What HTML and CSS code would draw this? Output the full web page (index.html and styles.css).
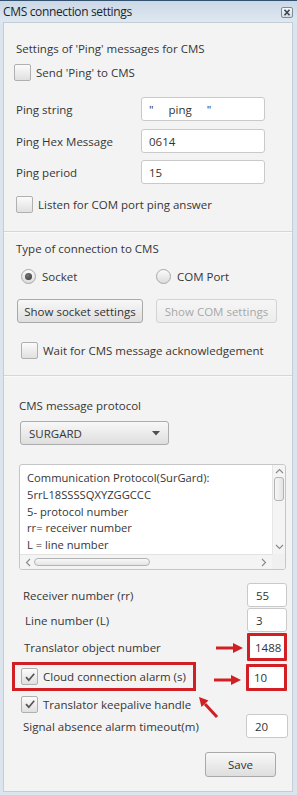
FILE: index.html
```html
<!DOCTYPE html>
<html>
<head>
<meta charset="utf-8">
<link rel="stylesheet" href="styles.css">
</head>
<body>
<div class="win">
  <div class="titlebar">
    <span class="title">CMS connection settings</span>
    <span class="close"><svg width="10" height="9" viewBox="0 0 10 9"><path d="M2.5 1.8 L7.5 7.2 M7.5 1.8 L2.5 7.2" stroke="#3a4350" stroke-width="1.6" fill="none"/></svg></span>
  </div>
  <div class="panel">
    <div class="s1">
      <div class="row heading h1">Settings of 'Ping' messages for CMS</div>
      <div class="row chkrow send"><span class="cb"></span><span>Send 'Ping' to CMS</span></div>
      <div class="row field f-ps"><span class="lbl1">Ping string</span><span class="inp wide">"&nbsp;&nbsp;&nbsp;&nbsp;&nbsp;ping&nbsp;&nbsp;&nbsp;&nbsp;&nbsp;"</span></div>
      <div class="row field f-hex"><span class="lbl1">Ping Hex Message</span><span class="inp wide">0614</span></div>
      <div class="row field f-per"><span class="lbl1">Ping period</span><span class="inp wide">15</span></div>
      <div class="row chkrow listen"><span class="cb"></span><span>Listen for COM port ping answer</span></div>
    </div>
    <div class="sep sep1"></div>
    <div class="s2">
      <div class="row heading h2">Type of connection to CMS</div>
      <div class="row radios">
        <span class="radio-item first"><span class="rb on"></span>Socket</span>
        <span class="radio-item"><span class="rb"></span>COM Port</span>
      </div>
      <div class="row btns">
        <span class="btn b-sock">Show socket settings</span>
        <span class="btn b-com disabled">Show COM settings</span>
      </div>
      <div class="row chkrow wait"><span class="cb"></span><span>Wait for CMS message acknowledgement</span></div>
    </div>
    <div class="sep sep2"></div>
    <div class="s3">
      <div class="row heading h3">CMS message protocol</div>
      <div class="combo"><span>SURGARD</span><svg width="8" height="5" viewBox="0 0 8 5"><path d="M0 0 H8 L4 4.5 Z" fill="#505050"/></svg></div>
      <div class="tarea">
        <div class="tcontent">
          <div>Communication Protocol(SurGard):</div>
          <div>5rrL18SSSSQXYZGGCCC</div>
          <div>5- protocol number</div>
          <div>rr= receiver number</div>
          <div>L = line number</div>
        </div>
        <div class="vscroll">
          <svg class="arr" width="9" height="6" viewBox="0 0 9 6"><path d="M1 5 L4.5 1.5 L8 5" stroke="#8a8a8a" fill="none" stroke-width="1.1"/></svg>
          <span class="vthumb"></span>
          <span class="vspace"></span>
          <svg class="arr" width="9" height="6" viewBox="0 0 9 6"><path d="M1 1 L4.5 4.5 L8 1" stroke="#8a8a8a" fill="none" stroke-width="1.1"/></svg>
        </div>
        <div class="hscroll">
          <svg width="6" height="9" viewBox="0 0 6 9"><path d="M5 1 L1.5 4.5 L5 8" stroke="#8a8a8a" fill="none" stroke-width="1.1"/></svg>
          <span class="hthumb"></span>
          <span class="hspace"></span>
          <svg width="6" height="9" viewBox="0 0 6 9"><path d="M1 1 L4.5 4.5 L1 8" stroke="#8a8a8a" fill="none" stroke-width="1.1"/></svg>
        </div>
        <div class="corner"></div>
      </div>
      <div class="row nfield f-rec"><span class="lbl2">Receiver number (rr)</span><span class="inp num">55</span></div>
      <div class="row nfield f-line"><span class="lbl2 l-line">Line number (L)</span><span class="inp num">3</span></div>
      <div class="row nfield f-tr"><span class="lbl2 l-tr">Translator object number</span><span class="inp num red">1488</span></div>
      <div class="row nfield f-cloud">
        <span class="redbox"><span class="cb checked"><svg width="14" height="14" viewBox="0 0 14 14"><path d="M3 7.2 L5.8 10.2 L11.2 3.8" stroke="#555" stroke-width="1.7" fill="none"/></svg></span><span>Cloud connection alarm (s)</span></span>
        <span class="inp num red cl">10</span>
      </div>
      <div class="row chkrow keep"><span class="cb checked"><svg width="14" height="14" viewBox="0 0 14 14"><path d="M3 7.2 L5.8 10.2 L11.2 3.8" stroke="#555" stroke-width="1.7" fill="none"/></svg></span><span>Translator keepalive handle</span></div>
      <div class="row nfield f-sig"><span class="lbl2">Signal absence alarm timeout(m)</span><span class="inp num sig">20</span></div>
      <div class="row savebar"><span class="btn save">Save</span></div>
    </div>
  </div>
  <svg class="annot" width="297" height="795" viewBox="0 0 297 795">
    <g fill="#d11f24" stroke="#d11f24">
      <line x1="216" y1="647" x2="236" y2="647" stroke-width="3"/>
      <path d="M233 642 L243 647 L233 652 Z" stroke="none"/>
      <line x1="214" y1="679" x2="234" y2="679" stroke-width="3"/>
      <path d="M231 674 L241 679 L231 684 Z" stroke="none"/>
      <line x1="217" y1="716" x2="205" y2="703" stroke-width="3"/>
      <path d="M199 696 L208.5 699.5 L201.5 706 Z" stroke="none"/>
    </g>
  </svg>
</div>
</body>
</html>
```
FILE: styles.css
```css
* { box-sizing: border-box; }
body {
  margin: 0;
  font-family: "Open Sans", "Noto Sans", sans-serif;
  font-size: 11.5px;
  color: #363636;
  background: #fff;
}
.win {
  position: relative;
  width: 297px;
  height: 795px;
  background: #dce5ee;
  border-top: 1px solid #34506f;
}
.titlebar {
  height: 21px;
  display: flex;
  align-items: center;
  justify-content: space-between;
  padding: 0 4px 0 3px;
  background: linear-gradient(#cbd8e6, #dfe8f1);
}
.title { font-size: 12px; letter-spacing: -0.35px; color: #1f2328; }
.close {
  width: 12px;
  height: 11px;
  border: 1px solid #7e8b9a;
  border-radius: 2px;
  background: linear-gradient(#f6f8fb, #d3dbe4);
  display: flex;
  align-items: center;
  justify-content: center;
  margin-top: 2px;
}
.panel {
  margin: 0 4px 0 3px;
  height: 770px;
  background: #f3f3f3;
  border: 1px solid #c4ccd5;
}
.row { display: flex; align-items: center; white-space: nowrap; }

/* section 1 */
.h1 { margin: 15px 0 0 12px; height: 20px; }
.send { margin: 4px 0 0 10px; height: 20px; }
.f-ps { margin: 15px 0 0 12px; height: 24px; }
.f-hex { margin: 8px 0 0 12px; height: 24px; }
.f-per { margin: 7px 0 0 12px; height: 24px; }
.listen { margin: 10px 0 0 12px; height: 20px; }
.lbl1 { width: 125px; }

.chkrow .cb { margin-right: 5px; }
.cb {
  width: 17px;
  height: 17px;
  border: 1px solid #b0b0b0;
  border-radius: 2px;
  background: linear-gradient(#fbfbfb, #e0e0e0);
  display: inline-flex;
  align-items: center;
  justify-content: center;
  flex: none;
}
.inp {
  height: 24px;
  background: #fff;
  border: 1px solid #c9c9c9;
  border-radius: 3px;
  display: flex;
  align-items: center;
  padding-left: 7px;
  color: #333;
}
.inp.wide { width: 124px; }

.sep {
  height: 2px;
  border-top: 1px solid #d6d6d6;
  background: #fafafa;
}
.sep1 { margin-top: 17px; }
.sep2 { margin-top: 15px; }

/* section 2 */
.h2 { margin: 5px 0 0 12px; height: 20px; }
.radios { margin: 8px 0 0 17px; height: 20px; }
.radio-item { display: flex; align-items: center; }
.radio-item.first { width: 135px; }
.rb {
  width: 15px;
  height: 15px;
  border: 1px solid #a8a8a8;
  border-radius: 50%;
  background: linear-gradient(#fbfbfb, #dcdcdc);
  margin-right: 6px;
  display: inline-flex;
  align-items: center;
  justify-content: center;
}
.rb.on::after {
  content: "";
  width: 7px;
  height: 7px;
  border-radius: 50%;
  background: radial-gradient(circle at 40% 35%, #777, #333);
}
.btns { margin: 13px 0 0 13px; height: 24px; gap: 13px; }
.btn {
  height: 24px;
  display: flex;
  align-items: center;
  justify-content: center;
  border: 1px solid #a9a9a9;
  border-radius: 3px;
  background: linear-gradient(#f8f8f8, #dedede);
  color: #333;
}
.b-sock { width: 126px; }
.b-com { width: 121px; }
.btn.disabled {
  border-color: #d3d3d3;
  background: linear-gradient(#f6f6f6, #ececec);
  color: #a8a8a8;
}
.wait { margin: 17px 0 0 17px; height: 20px; }

/* section 3 */
.h3 { margin: 18px 0 0 15px; height: 20px; }
.combo {
  margin: 6px 0 0 16px;
  width: 149px;
  height: 24px;
  border: 1px solid #acacac;
  border-radius: 3px;
  background: linear-gradient(#f8f8f8, #dedede);
  display: flex;
  align-items: center;
  justify-content: space-between;
  padding: 0 8px 0 8px;
}
.tarea {
  margin: 19px 0 0 15px;
  width: 267px;
  height: 106px;
  border: 1px solid #c6c6c6;
  border-radius: 3px;
  background: #fff;
  display: grid;
  grid-template-columns: 1fr 13px;
  grid-template-rows: 1fr 15px;
  overflow: hidden;
}
.tcontent {
  padding: 5px 0 0 7px;
  font-size: 11.2px;
  line-height: 16.8px;
  white-space: nowrap;
  overflow: hidden;
}
.vscroll {
  display: flex;
  flex-direction: column;
  align-items: center;
  padding: 3px 0 0 0;
  background: #f4f4f4;
  border-left: 1px solid #e6e6e6;
}
.vthumb {
  width: 10px;
  height: 24px;
  margin-top: 3px;
  border: 1px solid #b3b3b3;
  border-radius: 3px;
  background: linear-gradient(90deg, #f6f6f6, #e4e4e4);
}
.vspace { flex: 1; }
.vscroll .arr:last-child { margin-bottom: 4px; }
.hscroll {
  display: flex;
  align-items: center;
  padding: 0 5px 0 5px;
  background: #f4f4f4;
  border-top: 1px solid #e2e2e2;
}
.hthumb {
  width: 116px;
  height: 8px;
  margin-left: 3px;
  border: 1px solid #b3b3b3;
  border-radius: 4px;
  background: linear-gradient(#f8f8f8, #e4e4e4);
}
.hspace { flex: 1; }
.corner { background: #f0f0f0; }

.nfield { margin-right: 5px; }
.lbl2 { flex: 1; padding-left: 19px; }
.l-line { padding-left: 21px; }
.l-tr { padding-left: 20px; }
.inp.num { width: 40px; height: 24px; padding-left: 8px; }
.f-rec { margin-top: 13px; height: 24px; }
.f-line { margin-top: 1px; height: 24px; }
.f-tr { margin-top: 1px; height: 28px; }
.inp.red { border: 3px solid #d11f24; border-radius: 1px; height: 28px; padding-left: 5px; }
.f-cloud { margin-top: 1px; height: 29px; align-items: flex-start; }
.redbox {
  margin-left: 8px;
  width: 184px;
  height: 29px;
  border: 3px solid #d11f24;
  display: flex;
  align-items: center;
  padding-left: 6px;
}
.redbox .cb { margin-right: 5px; }
.inp.cl { width: 41px; height: 27px; margin: 2px 0 0 auto; }
.keep { margin: 3px 0 0 17px; height: 20px; }
.f-sig { margin-top: 0; height: 24px; margin-right: 4px; }
.inp.sig { width: 42px; }
.savebar { margin-top: 14px; justify-content: flex-end; padding-right: 16px; }
.save { width: 71px; height: 25px; }

.annot { position: absolute; left: 0; top: 0; pointer-events: none; }
```
